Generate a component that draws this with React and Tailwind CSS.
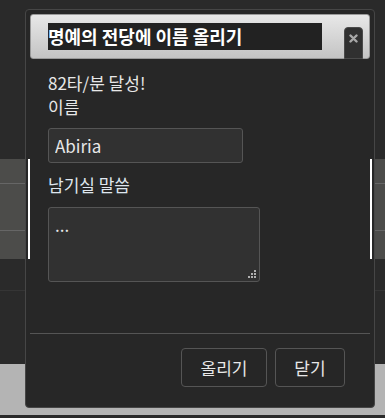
import React from 'react';

export default function App() {
  return (
    <div className="relative w-[385px] h-[418px] overflow-hidden bg-[#2a2a2a] font-['Noto_Sans_CJK_KR',sans-serif]">
      {/* page behind the modal */}
      <div className="h-[159px]" />
      <div className="h-[100px] bg-[#4c4c4a] flex flex-col">
        <div className="h-[24px]" />
        <div className="h-[47px] border-t border-[#666]" />
        <div className="h-[29px] border-t border-[#666]" />
      </div>
      <div className="h-[31px]" />
      <div className="h-[74px] border-t border-[#353535]" />
      <div className="h-[51px] bg-[#b4b4b4]" />
      <div className="h-[3px] bg-[#2a2a2a]" />

      {/* modal */}
      <div className="absolute left-[25px] top-[9px] w-[350px] h-[399px] rounded-[4px] border border-[#464646] bg-[#272727] p-[4px] flex flex-col">
        <div className="relative h-[45px] shrink-0 rounded-[3px] border border-[#9a9a9a] bg-gradient-to-b from-[#e8e8e8] to-[#c4c4c4] flex items-center pl-[17px]">
          <span className="w-[274px] h-[27px] bg-[#222] text-white font-bold text-[18px] leading-[27px] whitespace-nowrap">
            명예의 전당에 이름 올리기
          </span>
          <button className="absolute left-[313px] top-[12px] -bottom-px w-[19px] rounded-t-[4px] border border-[#4a4a4a] bg-[#303030] flex justify-center pt-[6px]">
            <svg width="9" height="9" viewBox="0 0 9 9">
              <path d="M1.5 1.5 L7.5 7.5 M7.5 1.5 L1.5 7.5" stroke="#a8a8a8" strokeWidth="2.4" strokeLinecap="round" />
            </svg>
          </button>
        </div>

        <div className="h-[274px] shrink-0 px-[18px] pt-[12px] flex flex-col text-[17px] leading-[24px] text-[#e8e8e8]">
          <div>82타/분 달성!</div>
          <div>이름</div>
          <input
            readOnly
            value="Abiria"
            className="mt-[9px] w-[195px] h-[35px] rounded-[3px] border border-[#555] bg-[#313131] px-[6px] text-[17px] text-[#e8e8e8] outline-none"
          />
          <div className="mt-[10px] text-[#dfe6ee]">남기실 말씀</div>
          <div className="relative mt-[10px] w-[212px] h-[75px]">
            <textarea
              readOnly
              value="..."
              className="w-full h-full resize-none rounded-[3px] border border-[#555] bg-[#313131] px-[6px] py-[5px] text-[17px] leading-[24px] text-[#e8e8e8] outline-none"
            />
            <svg className="absolute right-[4px] bottom-[4px]" width="8" height="8" viewBox="0 0 8 8">
              <rect x="6" y="0" width="2" height="2" fill="#b0b0b0" />
              <rect x="3" y="3" width="2" height="2" fill="#b0b0b0" />
              <rect x="6" y="3" width="2" height="2" fill="#b0b0b0" />
              <rect x="0" y="6" width="2" height="2" fill="#b0b0b0" />
              <rect x="3" y="6" width="2" height="2" fill="#b0b0b0" />
              <rect x="6" y="6" width="2" height="2" fill="#b0b0b0" />
            </svg>
          </div>
        </div>

        <div className="h-px shrink-0 bg-[#555]" />

        <div className="mt-[14px] flex justify-end gap-[8px] pr-[25px]">
          <button className="w-[86px] h-[39px] rounded-[4px] border border-[#555] bg-[#262626] text-[17px] text-[#e8e8e8]">
            올리기
          </button>
          <button className="w-[70px] h-[39px] rounded-[4px] border border-[#555] bg-[#262626] text-[17px] text-[#e8e8e8]">
            닫기
          </button>
        </div>
      </div>

      {/* white bars showing through */}
      <div className="absolute left-[28px] top-[159px] w-[2px] h-[100px] bg-white" />
      <div className="absolute left-[370px] top-[159px] w-[2px] h-[100px] bg-white" />
    </div>
  );
}
